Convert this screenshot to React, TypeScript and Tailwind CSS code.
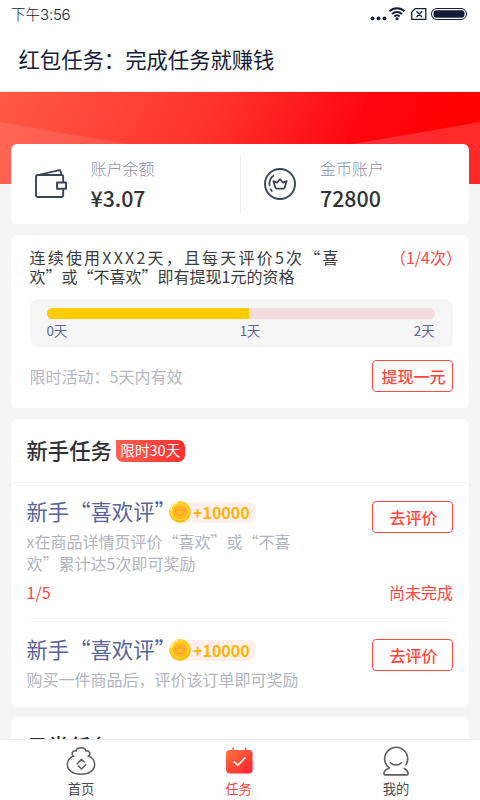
import type { ReactNode } from 'react';

function StatusBar() {
  return (
    <div className="flex h-7 items-center justify-between pl-[11px] pr-[13px] text-[#141c38]">
      <span className="flex items-center text-[14.5px] font-light leading-5">
        <span>下午</span>
        <span className="pt-px font-['Inter',sans-serif] text-[15px] tracking-[-0.2px]">3:56</span>
      </span>
      <svg width="98" height="16" viewBox="0 0 98 16" fill="none" stroke="currentColor">
        <g fill="currentColor" stroke="none">
          <circle cx="3.5" cy="12.3" r="1.9" />
          <circle cx="9.5" cy="12.3" r="1.9" />
          <circle cx="15.5" cy="12.3" r="1.9" />
          <circle cx="28" cy="12.7" r="1.5" />
        </g>
        <path d="M20.5 5.4c4-4.1 11-4.1 15 0M23 8c2.9-2.8 7.1-2.8 10 0M25.3 10.5c1.6-1.5 3.8-1.5 5.4 0" strokeWidth="2" />
        <path d="M46.2 2.6h10.6v10.8H42.7V6.3zM47.5 5.2l5.5 5.8M53 5.2L47.5 11" strokeWidth="1.3" />
        <rect x="62.5" y="2.5" width="35" height="11" rx="5.5" />
        <rect x="64.5" y="4.3" width="31" height="7.4" rx="3.2" fill="currentColor" stroke="none" />
      </svg>
    </div>
  );
}

function HeroBackground() {
  return (
    <svg className="block h-[92px] w-full" viewBox="0 0 480 92" preserveAspectRatio="none">
      <defs>
        <linearGradient id="hero" x1="0" y1="0" x2="1" y2="0.1">
          <stop offset="0" stopColor="#ff5944" />
          <stop offset="0.45" stopColor="#ff342c" />
          <stop offset="0.78" stopColor="#ff0610" />
          <stop offset="1" stopColor="#ff0000" />
        </linearGradient>
      </defs>
      <rect width="480" height="92" fill="url(#hero)" />
      <path d="M0 30L360 92H0z" fill="#fff" fillOpacity="0.1" />
      <path d="M480 30L120 92h360z" fill="#fff" fillOpacity="0.16" />
    </svg>
  );
}

function WalletIcon() {
  return (
    <svg width="32" height="32" viewBox="0 0 32 32" fill="none" stroke="#38445a" strokeWidth="1.9" strokeLinejoin="round">
      <path d="M28.2 14.5V8.8a1.8 1.8 0 0 0-1.8-1.8H2.8A1.8 1.8 0 0 0 1 8.8v18.4A1.8 1.8 0 0 0 2.8 29h23.6a1.8 1.8 0 0 0 1.8-1.8V20.8" />
      <path d="M3 7L24.5 2.2a.8.8 0 0 1 1 .7L26.5 7" strokeWidth="1.7" />
      <path d="M22 14.5h9v6.3h-9z" />
    </svg>
  );
}

function CoinIcon() {
  return (
    <svg className="-ml-px mr-px" width="32" height="32" viewBox="0 0 32 32" fill="none" stroke="#38445a" strokeWidth="1.9" strokeLinejoin="round">
      <circle cx="16" cy="16" r="15" />
      <path d="M5.6 18.2c-.7-4.5 1-8.7 4.4-10.9M6.4 20.6c.5 1.2 1.1 2.1 2 3" strokeWidth="1.7" />
      <path d="M9.3 13l3.6 1.6L16 11.2l3.1 3.4 3.6-1.6-2.1 6.8q-.2.8-1 .8h-7.2q-.8 0-1-.8z" strokeWidth="1.7" />
    </svg>
  );
}

interface BalanceProps {
  icon: ReactNode;
  label: string;
  value: string;
}

function Balance({ icon, label, value }: BalanceProps) {
  return (
    <div className="flex flex-1 items-center pl-6">
      {icon}
      <div className="ml-[23.5px]">
        <p className="pt-px text-base font-light leading-6 text-[#8c91ab]">{label}</p>
        <p className="mt-[3px] text-[21.33px] font-medium leading-[30px] text-[#303236]">{value}</p>
      </div>
    </div>
  );
}

function OutlineButton({ children }: { children: ReactNode }) {
  return (
    <button className="flex h-8 w-[81px] shrink-0 items-center justify-center rounded border-[1.5px] border-[#ff4a45] pl-0.5 text-base font-medium leading-none text-[#ff4640]">
      {children}
    </button>
  );
}

function ActivityCard() {
  return (
    <section className="mt-[11px] h-[173px] rounded-md bg-white pl-[18.5px] pr-4 pt-[13px]">
      <div className="flex justify-between text-base leading-[19px] text-[#3a3c40]">
        <p className="whitespace-nowrap">
          <span className="tracking-[2.2px]">连续使用XXX2天，且每天评价5次“喜</span>
          <br />
          欢”或“不喜欢”即有提现1元的资格
        </p>
        <p className="-mr-[9px] whitespace-nowrap text-[#ff4a45]">（1/4次）</p>
      </div>
      <div className="mt-[13px] h-12 rounded-lg bg-[#f5f5f5] pl-[17px] pr-[18.5px] pt-[9px]">
        <div className="h-[11px] overflow-hidden rounded-full bg-[#f3dcde]">
          <div className="h-full bg-[#ffcc00]" style={{ width: '52.2%' }} />
        </div>
        <div className="mt-[3px] grid grid-cols-3 text-[13.33px] leading-[18px] text-[#5b659c]">
          <span>0天</span>
          <span className="pl-[19px] text-center">1天</span>
          <span className="text-right">2天</span>
        </div>
      </div>
      <div className="mt-[13px] flex items-center justify-between">
        <p className="text-base leading-6 text-[#b4b7c2]">限时活动：5天内有效</p>
        <OutlineButton>提现一元</OutlineButton>
      </div>
    </section>
  );
}

function GoldCoin() {
  return (
    <svg className="relative z-10 -mr-[11px] mt-0.5" width="22" height="22" viewBox="0 0 22 22">
      <circle cx="11" cy="11" r="10.7" fill="#ffb800" />
      <circle cx="10.5" cy="10.3" r="9.8" fill="#ffd02a" />
      <circle cx="11" cy="11" r="7" fill="#ffb51f" />
      <path d="M6.5 8.8l2.5.8q2-2.3 4 0l2.5-.8-.7 4.5q-3.800 2.600-7.600 0z" fill="#ffbd2c" stroke="#ff982b" strokeLinejoin="round" />
      <path d="M1.8 8.5Q3.3 3 8 1.4" fill="none" stroke="#fff3b0" strokeWidth="1.6" strokeLinecap="round" />
    </svg>
  );
}

function TaskHeading({ title, reward }: { title: string; reward: string }) {
  return (
    <div className="flex h-[30px] items-center">
      <h3 className="w-[142.5px] whitespace-nowrap text-[21.33px] leading-[30px] text-[#58639a]">{title}</h3>
      <GoldCoin />
      <span className="mt-0.5 h-[21px] w-[75px] rounded-[7px] bg-[#ffeeee] pl-[13px] text-base font-bold leading-[21px] text-[#ffb400]">
        {reward}
      </span>
    </div>
  );
}

function TaskCard() {
  return (
    <section className="mt-[11px] h-[288px] rounded-md bg-white">
      <div className="flex h-16 items-center border-b border-[#f4f4f6] pl-[15.5px]">
        <h2 className="-mt-0.5 text-[21.33px] font-medium leading-[30px] text-[#303236]">新手任务</h2>
        <span className="ml-1 h-[22px] rounded-[7px] rounded-tl-none bg-gradient-to-r from-[#ff6050] to-[#ff2b2e] px-[4.5px] text-[14.6px] leading-[20px] text-white">
          限时30天
        </span>
      </div>
      <div className="flex h-[135px] justify-between pl-[15.5px] pr-4 pt-[13px]">
        <div>
          <TaskHeading title="新手“喜欢评”" reward="+10000" />
          <p className="mt-1 whitespace-nowrap text-base leading-[22px] text-[#b1b4c0]">
            x在商品详情页评价“喜欢”或“不喜
            <br />
            欢”累计达5次即可奖励
          </p>
          <p className="mt-1.5 text-base leading-6 text-[#ff4640]">1/5</p>
        </div>
        <div className="flex flex-col items-end pt-[5px]">
          <OutlineButton>去评价</OutlineButton>
          <p className="mt-[47px] text-base leading-6 text-[#ff4640]">尚未完成</p>
        </div>
      </div>
      <div className="mx-[18px] border-t border-[#f4f4f6]" />
      <div className="flex justify-between pl-[15.5px] pr-4 pt-[15px]">
        <div>
          <TaskHeading title="新手“喜欢评”" reward="+10000" />
          <p className="mt-1 whitespace-nowrap text-base leading-[22px] text-[#b1b4c0]">
            购买一件商品后，评价该订单即可奖励
          </p>
        </div>
        <div className="pt-[5px]">
          <OutlineButton>去评价</OutlineButton>
        </div>
      </div>
    </section>
  );
}

function HomeIcon() {
  return (
    <svg width="30" height="30" viewBox="0 0 30 30" fill="none" stroke="#5c5d60" strokeWidth="1.5" strokeLinejoin="round">
      <path d="M8.4 10.6C6 9.8 5.3 7 7 5.6c.9-.8 2.1-1 3.1-.6.2-2 2-3.3 4.9-3.3s4.7 1.3 4.9 3.3c1-.4 2.2-.2 3.1.6 1.7 1.4 1 4.2-1.4 5" />
      <path d="M7.4 9.8C3.1 12 1.3 14.9 1.3 18.3c0 6.3 5.7 10 13.7 10s13.7-3.7 13.7-10c0-3.400-1.800-6.300-6.100-8.500" />
      <path d="M18.600 16.500L15.500 13.400l-4.800 4.800M11.900 19.400l3.600 3.600 4.800-4.800" />
    </svg>
  );
}

function TasksIcon() {
  return (
    <svg width="30" height="30" viewBox="0 0 30 30" fill="none">
      <defs>
        <linearGradient id="tasks" x1="0" y1="0" x2="1" y2="1">
          <stop offset="0" stopColor="#ff7440" />
          <stop offset="1" stopColor="#ff1f32" />
        </linearGradient>
      </defs>
      <path d="M9 1.5v4M21.7 1.5v4" stroke="#ff5a3c" strokeWidth="1.5" />
      <rect x="2" y="4" width="26.6" height="23.4" rx="4" fill="url(#tasks)" />
      <path d="M9.8 15.3l4 4 7.500-7.800" stroke="#fff" strokeWidth="1.6" />
    </svg>
  );
}

function ProfileIcon() {
  return (
    <svg width="30" height="30" viewBox="0 0 30 30" fill="none" stroke="#5c5d60" strokeWidth="1.6" strokeLinecap="round" strokeLinejoin="round">
      <path d="M25 18.7A11.500 11.500 0 1 0 8.3 22C5 23.3 3.2 25.7 2.9 27.4c-.1 1 .5 1.5 1.5 1.5h21.3c1 0 1.5-.6 1.4-1.500-.3-1.900-1.700-3.700-3.800-4.900" />
      <path d="M9.5 16.8c2.800 3 8.200 3 11 0" />
    </svg>
  );
}

interface TabItemProps {
  icon: ReactNode;
  label: string;
  active?: boolean;
}

function TabItem({ icon, label, active = false }: TabItemProps) {
  return (
    <div className={active ? 'flex flex-col items-center text-[#ff4640]' : 'flex flex-col items-center text-[#4b4c50]'}>
      {icon}
      <span className="mt-[3px] text-[13.33px] leading-5">{label}</span>
    </div>
  );
}

export default function App() {
  return (
    <div className="flex h-[800px] w-[480px] flex-col overflow-hidden bg-[#f4f4f4] font-['Noto_Sans_CJK_SC',sans-serif]">
      <header className="h-[92px] shrink-0 border-b border-[#f3f0f1] bg-white">
        <StatusBar />
        <h1 className="pl-[18.5px] pt-4 text-[21.33px] leading-[30px] text-[#141c38]">红包任务：完成任务就赚钱</h1>
      </header>
      <main className="min-h-0 flex-1 overflow-hidden">
        <HeroBackground />
        <div className="relative -mt-10 pl-[11px] pr-[11px]">
          <section className="flex h-20 items-center rounded-md bg-white">
            <Balance icon={<WalletIcon />} label="账户余额" value="¥3.07" />
            <div className="h-[59px] w-px bg-[#f0f0f2]" />
            <Balance icon={<CoinIcon />} label="金币账户" value="72800" />
          </section>
          <ActivityCard />
          <TaskCard />
          <section className="mt-2.5 rounded-md bg-white pb-5 pl-[15.5px] pt-3.5">
            <h2 className="text-[21.33px] font-medium leading-[30px] text-[#303236]">日常任务</h2>
          </section>
        </div>
      </main>
      <nav className="flex h-[61px] shrink-0 justify-between border-t border-[#ededed] bg-white pl-[66px] pr-[69px] pt-1.5">
        <TabItem icon={<HomeIcon />} label="首页" />
        <TabItem icon={<TasksIcon />} label="任务" active />
        <TabItem icon={<ProfileIcon />} label="我的" />
      </nav>
    </div>
  );
}
